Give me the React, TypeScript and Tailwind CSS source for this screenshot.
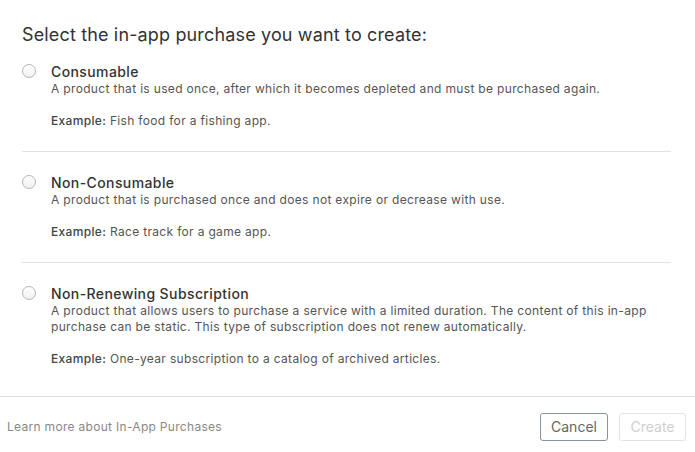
const font = { fontFamily: 'Inter, "Liberation Sans", Arial, sans-serif' };

type Option = {
    id: string;
    title: string;
    description: string[];
    example: string;
};

const options: Option[] = [
    {
        id: "consumable",
        title: "Consumable",
        description: [
            "A product that is used once, after which it becomes depleted and must be purchased again.",
        ],
        example: "Fish food for a fishing app.",
    },
    {
        id: "non-consumable",
        title: "Non-Consumable",
        description: ["A product that is purchased once and does not expire or decrease with use."],
        example: "Race track for a game app.",
    },
    {
        id: "non-renewing",
        title: "Non-Renewing Subscription",
        description: [
            "A product that allows users to purchase a service with a limited duration. The content of this in-app",
            "purchase can be static. This type of subscription does not renew automatically.",
        ],
        example: "One-year subscription to a catalog of archived articles.",
    },
];

function Radio() {
    return (
        <span className="w-[14px] h-[14px] rounded-full border border-[#b5b5b5] bg-gradient-to-b from-white to-[#f1f1f1] flex-shrink-0" />
    );
}

export default function App() {
    return (
        <div className="w-[695px] h-[452px] bg-white flex flex-col" style={font}>
            <div className="pl-[22px] pr-[24px] pt-[24px] flex-1">
                <h1 className="text-[18px] leading-[22px] tracking-[0.15px] text-[#333]">
                    Select the in-app purchase you want to create:
                </h1>

                <div className="mt-[18px]">
                    {options.map((option, i) => (
                        <div
                            key={option.id}
                            className={
                                i < options.length - 1
                                    ? "flex gap-[15px] pb-[22px] mb-[23px] border-b border-[#e3e3e3]"
                                    : "flex gap-[15px]"
                            }
                        >
                            <Radio />
                            <div className="min-w-0">
                                <p className="-mt-[1px] mb-[1px] text-[14px] leading-[17px] tracking-[0.4px] font-[450] text-[#333]">
                                    {option.title}
                                </p>
                                <div className="text-[12px] leading-[16px] tracking-[0.33px] text-[#555]">
                                    {option.description.map((line) => (
                                        <p key={line}>{line}</p>
                                    ))}
                                </div>
                                <p className="mt-[16px] text-[12px] leading-[16px] tracking-[0.33px] text-[#555]">
                                    <span className="font-medium text-[#444]">Example:</span> {option.example}
                                </p>
                            </div>
                        </div>
                    ))}
                </div>
            </div>

            <div className="h-[56px] border-t border-[#e3e3e3] flex items-center justify-between pl-[7px] pr-[9px] pt-[4px]">
                <a className="text-[12px] tracking-[0.3px] text-[#888] cursor-pointer">
                    Learn more about In-App Purchases
                </a>
                <div className="flex gap-[11px]">
                    <button className="w-[68px] h-[28px] rounded-[3px] border border-[#8a939c] text-[14px] text-[#666]">
                        Cancel
                    </button>
                    <button
                        disabled
                        className="w-[67px] h-[28px] rounded-[3px] border border-[#e2e2e2] text-[14px] text-[#d0d0d0]"
                    >
                        Create
                    </button>
                </div>
            </div>
        </div>
    );
}
